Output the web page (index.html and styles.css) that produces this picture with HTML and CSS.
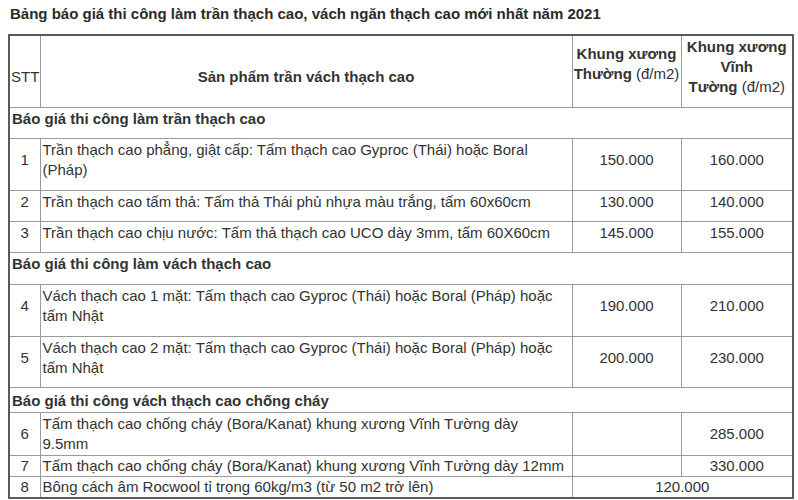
FILE: index.html
```html
<!DOCTYPE html>
<html lang="vi">
<head>
<meta charset="utf-8">
<title>Bảng báo giá thi công trần vách thạch cao</title>
<link rel="stylesheet" href="styles.css">
</head>
<body>
<div class="page">
  <h1 class="title">Bảng báo giá thi công làm trần thạch cao, vách ngăn thạch cao mới nhất năm 2021</h1>
  <table class="price">
    <colgroup>
      <col class="c-stt">
      <col class="c-name">
      <col class="c-p1">
      <col class="c-p2">
    </colgroup>
    <thead>
      <tr class="head">
        <th class="h-stt">STT</th>
        <th class="h-name">Sản phẩm trần vách thạch cao</th>
        <th class="h-p1"><b>Khung xương<br>Thường</b> <span class="unit">(đ/m2)</span></th>
        <th class="h-p2"><b>Khung xương<br>Vĩnh<br>Tường</b> <span class="unit">(đ/m2)</span></th>
      </tr>
    </thead>
    <tbody>
      <tr class="section">
        <td colspan="4">Báo giá thi công làm trần thạch cao</td>
      </tr>
      <tr class="tall">
        <td class="num">1</td>
        <td>Trần thạch cao phẳng, giật cấp: Tấm thạch cao Gyproc (Thái) hoặc Boral (Pháp)</td>
        <td class="num">150.000</td>
        <td class="num">160.000</td>
      </tr>
      <tr>
        <td class="num">2</td>
        <td>Trần thạch cao tấm thả: Tấm thả Thái phủ nhựa màu trắng, tấm 60x60cm</td>
        <td class="num">130.000</td>
        <td class="num">140.000</td>
      </tr>
      <tr>
        <td class="num">3</td>
        <td>Trần thạch cao chịu nước: Tấm thả thạch cao UCO dày 3mm, tấm 60X60cm</td>
        <td class="num">145.000</td>
        <td class="num">155.000</td>
      </tr>
      <tr class="section tall">
        <td colspan="4">Báo giá thi công làm vách thạch cao</td>
      </tr>
      <tr class="tall">
        <td class="num">4</td>
        <td>Vách thạch cao 1 mặt: Tấm thạch cao Gyproc (Thái) hoặc Boral (Pháp) hoặc tấm Nhật</td>
        <td class="num">190.000</td>
        <td class="num">210.000</td>
      </tr>
      <tr>
        <td class="num">5</td>
        <td>Vách thạch cao 2 mặt: Tấm thạch cao Gyproc (Thái) hoặc Boral (Pháp) hoặc tấm Nhật</td>
        <td class="num">200.000</td>
        <td class="num">230.000</td>
      </tr>
      <tr class="section compact-sec">
        <td colspan="4">Báo giá thi công vách thạch cao chống cháy</td>
      </tr>
      <tr class="r6">
        <td class="num">6</td>
        <td>Tấm thạch cao chống cháy (Bora/Kanat) khung xương Vĩnh Tường dày<br>9.5mm</td>
        <td class="num"></td>
        <td class="num">285.000</td>
      </tr>
      <tr class="tight">
        <td class="num">7</td>
        <td class="nowrap">Tấm thạch cao chống cháy (Bora/Kanat) khung xương Vĩnh Tường dày 12mm</td>
        <td class="num"></td>
        <td class="num">330.000</td>
      </tr>
      <tr class="tight">
        <td class="num">8</td>
        <td>Bông cách âm Rocwool tỉ trọng 60kg/m3 (từ 50 m2 trở lên)</td>
        <td class="num" colspan="2">120.000</td>
      </tr>
    </tbody>
  </table>
</div>
</body>
</html>
```
FILE: styles.css
```css
html, body {
  margin: 0;
  padding: 0;
  background: #ffffff;
}

.page {
  padding: 4px 6px 0 8px;
  font-family: "Liberation Sans", Arial, sans-serif;
  font-size: 15px;
  line-height: 20px;
  color: #333333;
}

.title {
  margin: 0 0 10px 2px;
  font-size: 15px;
  line-height: 20px;
  font-weight: bold;
  color: #2a2a2a;
}

.price {
  width: 784px;
  table-layout: fixed;
  border-collapse: collapse;
  border: 2px solid #5a5a5a;
}

.c-stt { width: 31px; }
.c-name { width: 532px; }
.c-p1 { width: 109px; }
.c-p2 { width: 112px; }

.price th,
.price td {
  border: 1px solid #9a9a9a;
  padding: 1px 2px 9px;
  text-align: left;
  vertical-align: middle;
  font-weight: normal;
}

.price .tall td {
  padding-bottom: 10px;
}

.price .head th {
  text-align: center;
  font-weight: bold;
}

.price .head .h-stt {
  text-align: left;
  font-weight: normal;
  padding: 12px 0 1px 1px;
}

.price .head .h-name {
  padding: 12px 2px 1px;
}

.price .head .h-p1 {
  padding: 1px 0 17px;
}

.price .head .h-p2 {
  padding: 1px 0 10px;
}

.unit {
  font-weight: normal;
}

.price .section td {
  font-weight: bold;
}

.price td.num {
  text-align: center;
}

.price .compact-sec td {
  padding: 3px 2px 1px;
}

.price .r6 td {
  padding: 1px 2px 1px;
}

.price .tight td {
  padding: 0 2px;
}

.nowrap {
  white-space: nowrap;
}
```
